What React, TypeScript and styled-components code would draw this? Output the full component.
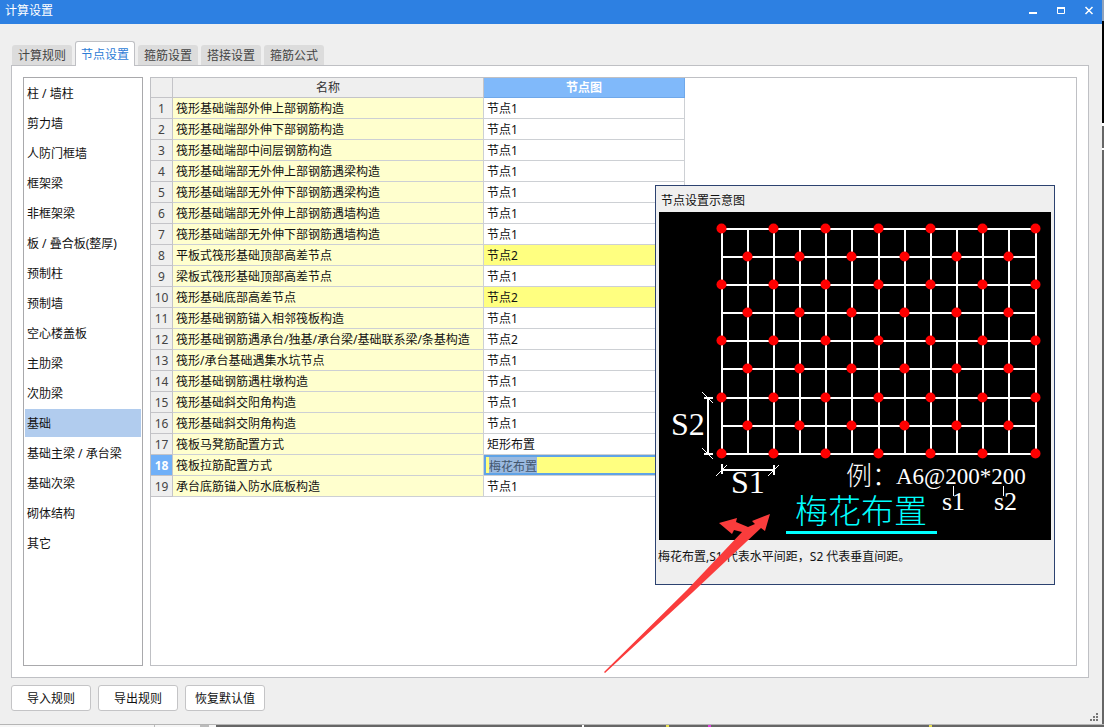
import React, { useEffect, useRef, useState } from "react";
import styled, { createGlobalStyle } from "styled-components";

const GlobalStyle = createGlobalStyle`
  * { box-sizing: border-box; }
  body {
    margin: 0;
    background: #666;
    color: #111;
    font: 12px/18px "Noto Sans", "Noto Sans CJK SC", sans-serif;
  }
  button, input { font: inherit; color: inherit; }
`;

const Desktop = styled.div`
  display: flex;
  flex-direction: column;
  min-height: 100vh;
  padding-right: 2px;
  background: linear-gradient(#8fa3bd 0 21px, #000 21px 123px, #fff 123px 126px, #666 126px 148px, #fff 148px 150px, #666 150px);
`;

const Dialog = styled.main`
  flex: 1;
  display: flex;
  flex-direction: column;
  background: #efefef;
`;

const TitleBar = styled.header`
  display: flex;
  align-items: flex-start;
  justify-content: space-between;
  height: 24px;
  padding: 1px 5px;
  background: #2d80e2;
  color: #fff;
`;

const Title = styled.h1`
  margin: 0;
  font-size: 12px;
  line-height: 20px;
  font-weight: 400;
`;

const WindowControls = styled.div`
  display: flex;
  gap: 12px;
  padding-top: 2px;
`;

const WindowButton = styled.button`
  display: flex;
  width: 16px;
  height: 16px;
  padding: 2px;
  border: 0;
  background: none;
`;

const Body = styled.div`
  flex: 1;
  display: flex;
  flex-direction: column;
  padding: 17px 13px 13px 11px;
`;

const Tabs = styled.div`
  display: flex;
  align-items: flex-end;
  gap: 3px;
  height: 25px;
  margin-bottom: -1px;
  padding-left: 1px;
  z-index: 1;
`;

const Tab = styled.button<{ $active: boolean }>`
  width: 60px;
  height: ${(p) => (p.$active ? 25 : 20)}px;
  margin-bottom: ${(p) => (p.$active ? 0 : 1)}px;
  padding: 2px 0 0;
  border: ${(p) => (p.$active ? "1px solid #bfc0c4" : "0")};
  border-bottom: 0;
  border-radius: 3px 3px 0 0;
  background: ${(p) => (p.$active ? "#fff" : "#dcdcdc")};
  color: ${(p) => (p.$active ? "#2d7cd6" : "#444")};
  white-space: nowrap;
`;

const Panel = styled.section`
  flex: 1;
  display: flex;
  gap: 7px;
  padding: 11px;
  border: 1px solid #bfc0c4;
  background: #fff;
`;

const CategoryList = styled.ul`
  flex: 0 0 120px;
  display: flex;
  flex-direction: column;
  gap: 2px;
  margin: 0;
  padding: 1px;
  border: 1px solid #a9a9ac;
  list-style: none;
`;

const Category = styled.button<{ $selected: boolean }>`
  display: block;
  width: 100%;
  height: 28px;
  padding: 2px 2px 0;
  border: 0;
  background: ${(p) => (p.$selected ? "#b1ccee" : "transparent")};
  text-align: left;
  white-space: nowrap;
`;

const GridPane = styled.div`
  position: relative;
  flex: 1;
  min-width: 0;
  border: 1px solid #bfc0c4;
`;

const Grid = styled.table`
  width: 534px;
  table-layout: fixed;
  border-collapse: separate;
  border-spacing: 0;
`;

const HeadCell = styled.th<{ $current?: boolean; $width: number }>`
  width: ${(p) => p.$width}px;
  height: 20px;
  padding: 1px 0 0;
  line-height: 18px;
  border-right: 1px solid ${(p) => (p.$current ? "#6fa8ea" : "#c4c4c8")};
  border-bottom: 1px solid ${(p) => (p.$current ? "#6fa8ea" : "#c4c4c8")};
  background: ${(p) => (p.$current ? "#80b9fa" : "#efefef")};
  color: ${(p) => (p.$current ? "#fff" : "#333")};
  font-weight: ${(p) => (p.$current ? 700 : 400)};
`;

const RowNumber = styled.th<{ $current: boolean }>`
  height: 21px;
  padding: 2px 0 0;
  border-right: 1px solid #c4c4c8;
  border-bottom: 1px solid #c4c4c8;
  background: ${(p) => (p.$current ? "#70b0f8" : "#efefef")};
  color: ${(p) => (p.$current ? "#fff" : "#444")};
  font-weight: ${(p) => (p.$current ? 700 : 400)};
`;

const NameCell = styled.td`
  padding: 2px 3px 0;
  border-right: 1px solid #cdd0d4;
  border-bottom: 1px solid #cdd0d4;
  background: #ffffce;
  white-space: nowrap;
`;

const NodeCell = styled.td<{ $changed: boolean; $editing: boolean }>`
  padding: ${(p) => (p.$editing ? "0" : "2px 3px 0")};
  border-right: 1px solid #cdd0d4;
  border-bottom: 1px solid #cdd0d4;
  background: ${(p) => (p.$changed ? "#ffff80" : "#fff")};
`;

const CellEditor = styled.input`
  display: block;
  width: 100%;
  height: 20px;
  padding: 1px 3px 0;
  border: 2px solid #60a3e6;
  border-radius: 0;
  outline: 0;
  background: #ffff80;
  &::selection { background: #9ab9df; color: #42566e; }
`;

const Popup = styled.aside`
  position: absolute;
  left: 504px;
  top: 107px;
  width: 400px;
  height: 400px;
  padding: 0 3px;
  border: 1px solid #2c4270;
  background: #efefef;
`;

const PopupTitle = styled.h2`
  margin: 0;
  padding: 6px 2px 2px;
  font-size: 12px;
  line-height: 18px;
  font-weight: 400;
`;

const Diagram = styled.svg`
  display: block;
  background: #000;
`;

const Caption = styled.p`
  margin: 8px 0 0 -1px;
  white-space: nowrap;
`;

const PointerArrow = styled.svg`
  position: absolute;
  left: 450px;
  top: 432px;
  pointer-events: none;
`;

const Actions = styled.div`
  display: flex;
  gap: 7px;
  margin-top: 7px;
`;

const ActionButton = styled.button`
  width: 80px;
  height: 26px;
  padding: 2px 0 0;
  border: 1px solid #c4c4c6;
  border-radius: 3px;
  background: #fff;
`;

const StatusStrip = styled.div`
  height: 3px;
  margin-right: -2px;
  background: linear-gradient(90deg, #f6f6f6 0 154px, #bbb 154px 155px, #f6f6f6 155px 200px, #bbb 200px 209px, #f6f6f6 209px 216px, #666 216px 582px, #fff 582px 584px, #666 584px 666px, #e8e050 666px 669px, #666 669px 708px, #e040e0 708px 711px, #666 711px 929px, #e8e050 929px 932px, #666 932px);
  border-top: 1px solid #b5b5b5;
`;

const ResizeGrip = styled.svg`
  align-self: flex-end;
  margin: -1px -10px -11px auto;
`;

const tabs = ["计算规则", "节点设置", "箍筋设置", "搭接设置", "箍筋公式"];

const categories = [
  "柱 / 墙柱", "剪力墙", "人防门框墙", "框架梁", "非框架梁", "板 / 叠合板(整厚)",
  "预制柱", "预制墙", "空心楼盖板", "主肋梁", "次肋梁", "基础",
  "基础主梁 / 承台梁", "基础次梁", "砌体结构", "其它",
];

type Row = { name: string; node: string; changed?: boolean };

const rows: Row[] = [
  { name: "筏形基础端部外伸上部钢筋构造", node: "节点1" },
  { name: "筏形基础端部外伸下部钢筋构造", node: "节点1" },
  { name: "筏形基础端部中间层钢筋构造", node: "节点1" },
  { name: "筏形基础端部无外伸上部钢筋遇梁构造", node: "节点1" },
  { name: "筏形基础端部无外伸下部钢筋遇梁构造", node: "节点1" },
  { name: "筏形基础端部无外伸上部钢筋遇墙构造", node: "节点1" },
  { name: "筏形基础端部无外伸下部钢筋遇墙构造", node: "节点1" },
  { name: "平板式筏形基础顶部高差节点", node: "节点2", changed: true },
  { name: "梁板式筏形基础顶部高差节点", node: "节点1" },
  { name: "筏形基础底部高差节点", node: "节点2", changed: true },
  { name: "筏形基础钢筋锚入相邻筏板构造", node: "节点1" },
  { name: "筏形基础钢筋遇承台/独基/承台梁/基础联系梁/条基构造", node: "节点2" },
  { name: "筏形/承台基础遇集水坑节点", node: "节点1" },
  { name: "筏形基础钢筋遇柱墩构造", node: "节点1" },
  { name: "筏形基础斜交阳角构造", node: "节点1" },
  { name: "筏形基础斜交阴角构造", node: "节点1" },
  { name: "筏板马凳筋配置方式", node: "矩形布置" },
  { name: "筏板拉筋配置方式", node: "梅花布置", changed: true },
  { name: "承台底筋锚入防水底板构造", node: "节点1" },
];

const currentRow = 17;

const columns = [63, 89, 115, 141, 167, 193, 220, 246, 272, 298, 324, 350, 377];
const lines = [17, 45, 73, 101, 129, 157, 186, 214, 242];

const serif = '"Liberation Serif", "Noto Sans CJK SC", serif';

function LayoutDiagram() {
  return (
    <Diagram width="392" height="328" viewBox="0 0 392 328" role="img" aria-label="梅花布置">
      <g stroke="#fff" strokeWidth="2">
        {columns.map((x) => <line key={x} x1={x} x2={x} y1="16" y2="243" />)}
        {lines.map((y) => <line key={y} x1="62" x2="378" y1={y} y2={y} />)}
        <path d="M49 186V242M45 186h9M45 242h9M63 258h52M63 252v10M115 253v10" fill="none" />
      </g>
      <path d="M43 180l11 11M43 236l11 11M57 264l11-11M109 264l11-11M294.500 274v10M344.500 274v10" stroke="#fff" fill="none" />
      <g fill="#f00">
        {lines.flatMap((y, r) =>
          columns.filter((_, c) => c % 2 === r % 2).map((x) => (
            <circle key={`${x}-${y}`} cx={x - 0.5} cy={y - 0.5} r="5" />
          )),
        )}
      </g>
      <g fill="#fff" fontFamily={serif}>
        <text x="12" y="223" fontSize="32">S2</text>
        <text x="72" y="281" fontSize="32">S1</text>
        <text x="187" y="273" fontSize="26" fontWeight="300">例：</text>
        <text x="237" y="272" fontSize="23">A6@200*200</text>
        <text x="283" y="298" fontSize="26">s1</text>
        <text x="335" y="298" fontSize="26">s2</text>
      </g>
      <text x="136" y="311" fontSize="33" fontWeight="300" fill="#0ff" fontFamily={serif}>梅花布置</text>
      <rect x="127" y="319" width="151" height="3" fill="#0ff" />
    </Diagram>
  );
}

export default function App() {
  const [tab, setTab] = useState(1);
  const [category, setCategory] = useState(11);
  const [value, setValue] = useState(rows[currentRow].node);
  const editor = useRef<HTMLInputElement>(null);

  useEffect(() => {
    editor.current?.focus();
    editor.current?.select();
  }, []);

  return (
    <>
      <GlobalStyle />
      <Desktop>
        <Dialog>
          <TitleBar>
            <Title>计算设置</Title>
            <WindowControls>
              <WindowButton aria-label="最小化">
                <svg width="12" height="12"><path d="M2 8h8" stroke="#fff" strokeWidth="2" /></svg>
              </WindowButton>
              <WindowButton aria-label="最大化">
                <svg width="12" height="12"><path d="M2.500 3v5.500h7V3" fill="none" stroke="#fff" /><path d="M2 3h8" stroke="#fff" strokeWidth="2" /></svg>
              </WindowButton>
              <WindowButton aria-label="关闭">
                <svg width="12" height="12"><path d="M2.500 2l7 7M9.500 2l-7 7" stroke="#fff" strokeWidth="1.500" /></svg>
              </WindowButton>
            </WindowControls>
          </TitleBar>
          <Body>
            <Tabs role="tablist">
              {tabs.map((label, i) => (
                <Tab key={label} role="tab" aria-selected={i === tab} $active={i === tab} onClick={() => setTab(i)}>
                  {label}
                </Tab>
              ))}
            </Tabs>
            <Panel>
              <CategoryList>
                {categories.map((label, i) => (
                  <li key={label}>
                    <Category $selected={i === category} onClick={() => setCategory(i)}>{label}</Category>
                  </li>
                ))}
              </CategoryList>
              <GridPane>
                <Grid>
                  <thead>
                    <tr>
                      <HeadCell $width={22} aria-label="序号" />
                      <HeadCell $width={311}>名称</HeadCell>
                      <HeadCell $width={201} $current>节点图</HeadCell>
                    </tr>
                  </thead>
                  <tbody>
                    {rows.map((row, i) => (
                      <tr key={row.name}>
                        <RowNumber scope="row" $current={i === currentRow}>{i + 1}</RowNumber>
                        <NameCell>{row.name}</NameCell>
                        <NodeCell $changed={!!row.changed} $editing={i === currentRow}>
                          {i === currentRow ? (
                            <CellEditor
                              ref={editor}
                              aria-label={row.name}
                              value={value}
                              onChange={(e) => setValue(e.target.value)}
                            />
                          ) : row.node}
                        </NodeCell>
                      </tr>
                    ))}
                  </tbody>
                </Grid>
                <Popup>
                  <PopupTitle>节点设置示意图</PopupTitle>
                  <LayoutDiagram />
                  <Caption>梅花布置,S1 代表水平间距，S2 代表垂直间距。</Caption>
                </Popup>
                <PointerArrow width="180" height="166" viewBox="601 510 180 166" aria-hidden="true">
                  <path
                    d="M604 672L687 590L742 532L734 530L732 534L719 523L737 518L736 522L748 527L755 524L752 521L770 514L765 531L761 528L693 592L605 673Z"
                    fill="#fa3c3c"
                  />
                </PointerArrow>
              </GridPane>
            </Panel>
            <Actions>
              <ActionButton>导入规则</ActionButton>
              <ActionButton>导出规则</ActionButton>
              <ActionButton>恢复默认值</ActionButton>
              <ResizeGrip width="9" height="9" aria-hidden="true">
                <path d="M6 0h2v2h-2zM3 3h2v2h-2zM6 3h2v2h-2zM0 6h2v2h-2zM3 6h2v2h-2zM6 6h2v2h-2z" fill="#777" />
              </ResizeGrip>
            </Actions>
          </Body>
        </Dialog>
        <StatusStrip />
      </Desktop>
    </>
  );
}
